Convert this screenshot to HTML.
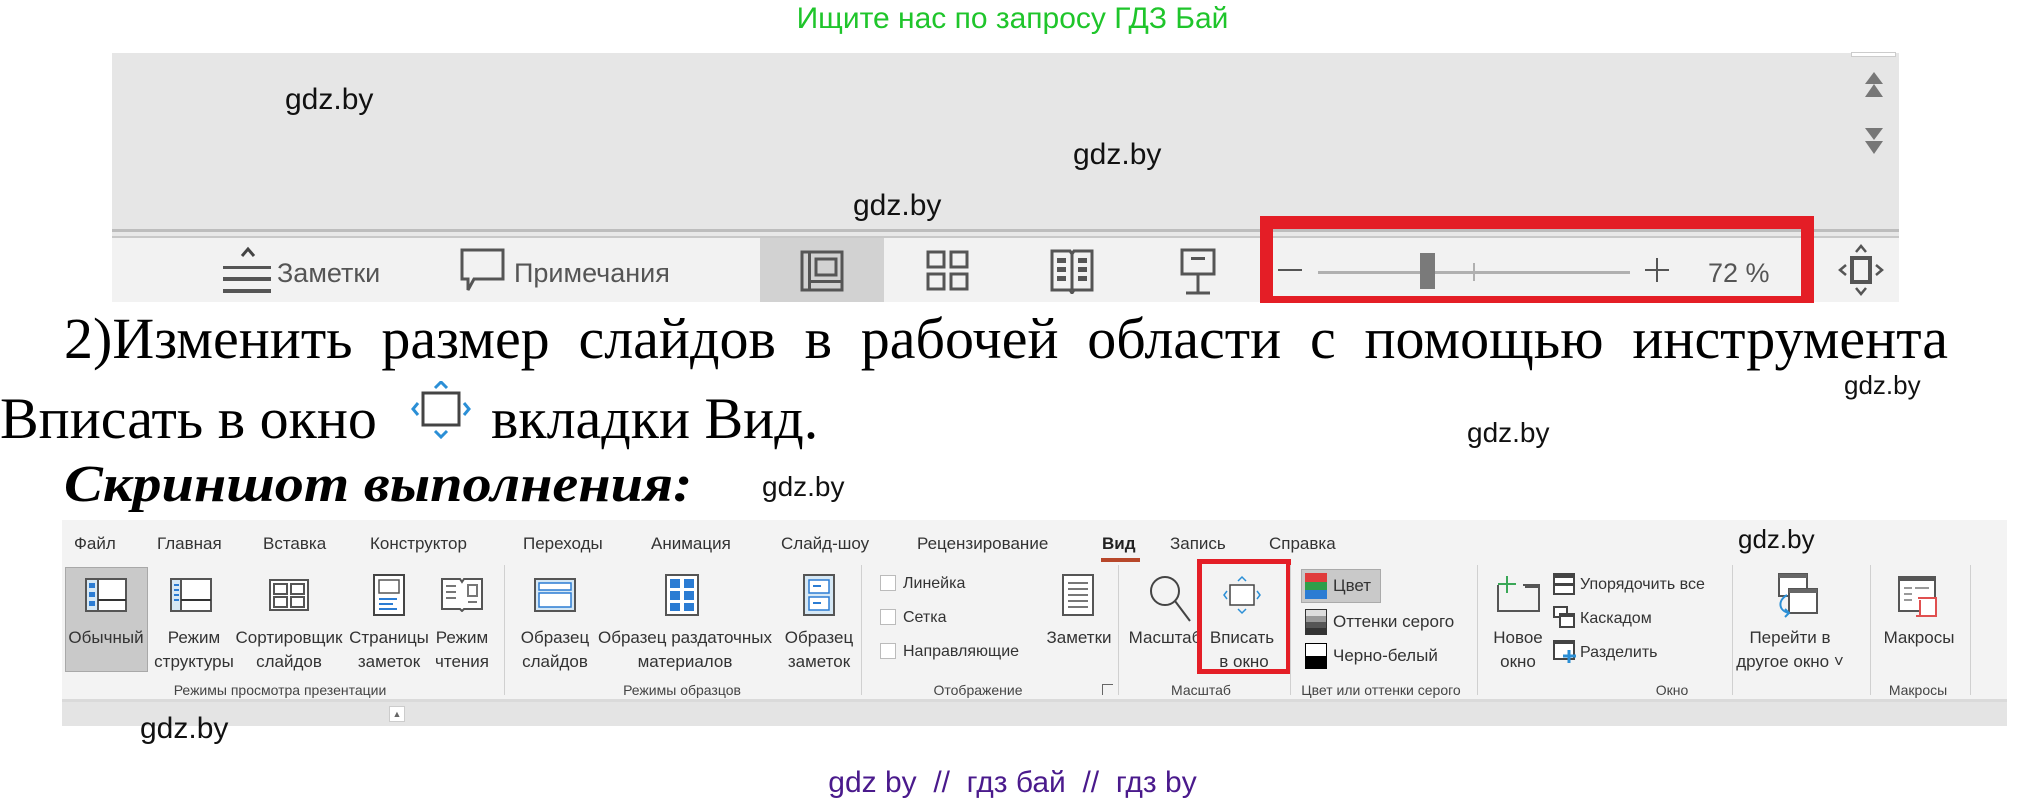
<!DOCTYPE html>
<html><head><meta charset="utf-8"><style>
*{margin:0;padding:0;box-sizing:border-box}
body{width:2025px;height:804px;background:#fff;position:relative;overflow:hidden;font-family:"Liberation Sans",sans-serif}
.a{position:absolute;white-space:nowrap}
.w{position:absolute;font-family:"Liberation Sans",sans-serif;color:#111;line-height:1;white-space:nowrap}
.s{font-family:"Liberation Serif",serif;color:#000;line-height:1;position:absolute;white-space:nowrap;transform-origin:0 0}
.r{position:absolute;font-size:17px;color:#333;line-height:1;white-space:nowrap}
.c{text-align:center;transform:translateX(-50%)}
.g{position:absolute;font-size:14px;color:#444;line-height:1;white-space:nowrap;transform:translateX(-50%)}
.sep{position:absolute;width:1px;background:#d0d0d0;top:565px;height:130px}
</style></head><body>

<div class="a" style="left:0;width:2025px;top:2px;text-align:center;font-size:30px;color:#1fc52b;line-height:34px">Ищите нас по запросу ГДЗ Бай</div>

<!-- top panel -->
<div class="a" style="left:112px;top:53px;width:1787px;height:176px;background:#e6e6e6"></div>
<div class="a" style="left:1851px;top:52px;width:45px;height:5px;background:#fff;border:1px solid #ccc"></div>
<div class="a" style="left:112px;top:229px;width:1787px;height:3px;background:#bdbdbd"></div>
<div class="a" style="left:112px;top:232px;width:1787px;height:4px;background:#e8e8e8"></div>
<div class="a" style="left:112px;top:236px;width:1787px;height:2px;background:#c8c8c8"></div>
<div class="a" style="left:112px;top:238px;width:1787px;height:64px;background:#f2f2f2"></div>
<svg class="a" style="left:1862px;top:72px" width="24" height="90" viewBox="0 0 24 90"><g fill="#777"><path d="M12 0 L21 12 H3Z M12 12 L21 25 H3Z"/><path d="M3 56 H21 L12 68Z M3 69 H21 L12 82Z"/></g></svg>

<!-- bottom bar -->
<svg class="a" style="left:222px;top:246px" width="52" height="50" viewBox="0 0 52 50"><path d="M20 10 L26 3 L32 10" stroke="#444" stroke-width="3" fill="none"/><g fill="#555"><rect x="1" y="20" width="48" height="3"/><rect x="1" y="31" width="48" height="4"/><rect x="1" y="43" width="48" height="4"/></g></svg>
<div class="a" style="left:277px;top:258px;font-size:27px;color:#555;line-height:30px">Заметки</div>
<svg class="a" style="left:460px;top:248px" width="46" height="46" viewBox="0 0 46 46"><path d="M2 2 H43 V31 H14 L8 42 L8 31 H2Z" fill="none" stroke="#555" stroke-width="3"/></svg>
<div class="a" style="left:514px;top:258px;font-size:27px;color:#555;line-height:30px">Примечания</div>
<div class="a" style="left:760px;top:238px;width:124px;height:64px;background:#d2d2d2"></div>
<svg class="a" style="left:800px;top:250px" width="44" height="42" viewBox="0 0 44 42"><rect x="2" y="2" width="40" height="38" fill="none" stroke="#555" stroke-width="3"/><rect x="8" y="2" width="3" height="38" fill="#555"/><rect x="16" y="9" width="20" height="16" fill="none" stroke="#555" stroke-width="3"/><rect x="11" y="30" width="31" height="3" fill="#555"/></svg>
<svg class="a" style="left:926px;top:250px" width="44" height="42" viewBox="0 0 44 42"><g fill="none" stroke="#555" stroke-width="3"><rect x="2" y="2" width="16" height="15"/><rect x="25" y="2" width="16" height="15"/><rect x="2" y="24" width="16" height="15"/><rect x="25" y="24" width="16" height="15"/></g></svg>
<svg class="a" style="left:1050px;top:248px" width="44" height="46" viewBox="0 0 44 46"><g fill="none" stroke="#555" stroke-width="3"><path d="M2 3 H20 L22 6 L24 3 H42 V42 H24 L22 45 L20 42 H2Z"/><path d="M22 6 V42"/></g><g fill="#555"><rect x="7" y="10" width="9" height="5"/><rect x="7" y="19" width="9" height="5"/><rect x="7" y="28" width="9" height="5"/><rect x="28" y="10" width="9" height="5"/><rect x="28" y="19" width="9" height="5"/><rect x="28" y="28" width="9" height="5"/></g></svg>
<svg class="a" style="left:1177px;top:248px" width="42" height="48" viewBox="0 0 42 48"><g fill="none" stroke="#555" stroke-width="3"><rect x="5" y="2" width="32" height="24"/><path d="M21 26 V44 M9 45 H33"/></g><rect x="14" y="9" width="14" height="3" fill="#555"/></svg>
<div class="a" style="left:1260px;top:216px;width:554px;height:87px;border:13px solid #e41e26;border-bottom-width:7px"></div>
<div class="a" style="left:1278px;top:269px;width:24px;height:2px;background:#555"></div>
<div class="a" style="left:1318px;top:271px;width:312px;height:3px;background:#b0b0b0"></div>
<div class="a" style="left:1420px;top:253px;width:15px;height:36px;background:#7a7a7a"></div>
<div class="a" style="left:1473px;top:263px;width:2px;height:18px;background:#b0b0b0"></div>
<div class="a" style="left:1645px;top:269px;width:24px;height:2px;background:#555"></div>
<div class="a" style="left:1656px;top:258px;width:2px;height:24px;background:#555"></div>
<div class="a" style="left:1708px;top:258px;font-size:27px;color:#555;line-height:30px">72 %</div>
<svg class="a" style="left:1838px;top:244px" width="46" height="52" viewBox="0 0 46 52"><rect x="14" y="14" width="18" height="24" fill="none" stroke="#555" stroke-width="4"/><g fill="none" stroke="#555" stroke-width="2.5"><path d="M18 8 L23 2 L28 8"/><path d="M18 44 L23 50 L28 44"/><path d="M8 21 L2 26 L8 31"/><path d="M38 21 L44 26 L38 31"/></g></svg>

<!-- body text -->
<div class="s" style="left:64px;top:310px;font-size:58px;width:1884px;text-align:justify;text-align-last:justify">2)Изменить размер слайдов в рабочей области с помощью инструмента</div>
<div class="s" style="left:0;top:390px;font-size:58px">Вписать в окно</div>
<svg class="a" style="left:410px;top:381px" width="64" height="58" viewBox="0 0 64 58"><rect x="13" y="12" width="36" height="32" fill="#fff" stroke="#444" stroke-width="3"/><g fill="none" stroke="#2b8fd6" stroke-width="3"><path d="M25 7 L31 1 L37 7"/><path d="M25 50 L31 56 L37 50"/><path d="M8 22 L3 28 L8 34"/><path d="M54 22 L59 28 L54 34"/></g></svg>
<div class="s" style="left:491px;top:390px;font-size:58px">вкладки Вид.</div>
<div class="s" style="left:64px;top:459px;font-size:52px;font-weight:bold;font-style:italic;transform:scaleX(1.12)">Скриншот выполнения:</div>

<!-- watermarks -->
<div class="w" style="left:285px;top:85px;font-size:30px">gdz.by</div>
<div class="w" style="left:853px;top:191px;font-size:30px">gdz.by</div>
<div class="w" style="left:1073px;top:140px;font-size:30px">gdz.by</div>
<div class="w" style="left:1844px;top:372px;font-size:26px">gdz.by</div>
<div class="w" style="left:1467px;top:419px;font-size:28px">gdz.by</div>
<div class="w" style="left:762px;top:473px;font-size:28px">gdz.by</div>

<!-- ribbon -->
<div class="a" style="left:62px;top:520px;width:1945px;height:181px;background:#f3f3f3"></div>
<div class="a" style="left:62px;top:701px;width:1945px;height:25px;background:#e4e4e4"></div>
<div class="a" style="left:62px;top:699px;width:1945px;height:3px;background:#dadada"></div>
<div class="a" style="left:389px;top:706px;width:16px;height:16px;background:#fff;border:1px solid #ccc;font-size:9px;color:#666;text-align:center;line-height:14px">▲</div>

<div class="r" style="left:74px;top:535px">Файл</div>
<div class="r" style="left:157px;top:535px">Главная</div>
<div class="r" style="left:263px;top:535px">Вставка</div>
<div class="r" style="left:370px;top:535px">Конструктор</div>
<div class="r" style="left:523px;top:535px">Переходы</div>
<div class="r" style="left:651px;top:535px">Анимация</div>
<div class="r" style="left:781px;top:535px">Слайд-шоу</div>
<div class="r" style="left:917px;top:535px">Рецензирование</div>
<div class="r" style="left:1102px;top:535px;font-weight:bold;color:#222">Вид</div>
<div class="a" style="left:1101px;top:558px;width:39px;height:4px;background:#b7472a"></div>
<div class="r" style="left:1170px;top:535px">Запись</div>
<div class="r" style="left:1269px;top:535px">Справка</div>

<div class="a" style="left:65px;top:567px;width:83px;height:105px;background:#c9c9c9;border:1px solid #a8a8a8"></div>
<svg class="a" style="left:85px;top:578px" width="42" height="34" viewBox="0 0 42 34"><rect x="1" y="1" width="40" height="32" fill="#fff" stroke="#555" stroke-width="2"/><rect x="1" y="1" width="12" height="32" fill="#d6e8f5" stroke="#555" stroke-width="2"/><g fill="#2b7cd3"><rect x="4" y="5" width="6" height="5"/><rect x="4" y="14" width="6" height="5"/><rect x="4" y="23" width="6" height="5"/></g><rect x="13" y="21" width="28" height="2" fill="#333"/></svg>
<svg class="a" style="left:170px;top:578px" width="42" height="34" viewBox="0 0 42 34"><rect x="1" y="1" width="40" height="32" fill="#fff" stroke="#555" stroke-width="2"/><rect x="1" y="1" width="10" height="32" fill="#d6e8f5" stroke="#555" stroke-width="2"/><g fill="#2b7cd3"><rect x="4" y="6" width="5" height="2"/><rect x="4" y="11" width="5" height="2"/><rect x="4" y="16" width="5" height="2"/><rect x="4" y="21" width="5" height="2"/></g><rect x="11" y="21" width="30" height="2" fill="#333"/></svg>
<svg class="a" style="left:269px;top:579px" width="40" height="32" viewBox="0 0 40 32"><g fill="#fff" stroke="#555" stroke-width="2"><rect x="1" y="1" width="38" height="30"/><rect x="5" y="5" width="13" height="10"/><rect x="22" y="5" width="13" height="10"/><rect x="5" y="18" width="13" height="10"/><rect x="22" y="18" width="13" height="10"/></g></svg>
<svg class="a" style="left:373px;top:574px" width="32" height="42" viewBox="0 0 32 42"><rect x="1" y="1" width="30" height="40" fill="#fff" stroke="#444" stroke-width="2"/><rect x="6" y="6" width="20" height="13" fill="#fff" stroke="#555" stroke-width="1.5"/><g fill="#2b7cd3"><rect x="6" y="24" width="18" height="2"/><rect x="6" y="29" width="14" height="2"/><rect x="6" y="34" width="18" height="2"/></g></svg>
<svg class="a" style="left:441px;top:578px" width="42" height="34" viewBox="0 0 42 34"><path d="M1 1 H19 L21 4 L23 1 H41 V31 H23 L21 33 L19 31 H1Z" fill="#fff" stroke="#555" stroke-width="2"/><g fill="#777"><rect x="5" y="7" width="10" height="2"/><rect x="5" y="13" width="10" height="2"/><rect x="5" y="19" width="10" height="2"/></g><rect x="27" y="7" width="9" height="11" fill="none" stroke="#777" stroke-width="2"/><rect x="27" y="23" width="9" height="2" fill="#777"/></svg>
<div class="r c" style="left:106px;top:629px">Обычный</div>
<div class="r c" style="left:194px;top:629px">Режим</div>
<div class="r c" style="left:194px;top:653px">структуры</div>
<div class="r c" style="left:289px;top:629px">Сортировщик</div>
<div class="r c" style="left:289px;top:653px">слайдов</div>
<div class="r c" style="left:389px;top:629px">Страницы</div>
<div class="r c" style="left:389px;top:653px">заметок</div>
<div class="r c" style="left:462px;top:629px">Режим</div>
<div class="r c" style="left:462px;top:653px">чтения</div>
<div class="g" style="left:280px;top:683px">Режимы просмотра презентации</div>
<div class="sep" style="left:504px"></div>

<svg class="a" style="left:534px;top:578px" width="42" height="34" viewBox="0 0 42 34"><rect x="1" y="1" width="40" height="32" fill="#d6e8f5" stroke="#555" stroke-width="2"/><rect x="5" y="5" width="32" height="7" fill="#fff" stroke="#2b7cd3" stroke-width="1.5"/><rect x="5" y="15" width="32" height="14" fill="#fff" stroke="#2b7cd3" stroke-width="1.5"/></svg>
<svg class="a" style="left:665px;top:574px" width="34" height="42" viewBox="0 0 34 42"><rect x="1" y="1" width="32" height="40" fill="#fff" stroke="#555" stroke-width="2"/><g fill="#2b7cd3"><rect x="5" y="5" width="10" height="9"/><rect x="19" y="5" width="10" height="9"/><rect x="5" y="17" width="10" height="9"/><rect x="19" y="17" width="10" height="9"/><rect x="5" y="29" width="10" height="8"/><rect x="19" y="29" width="10" height="8"/></g></svg>
<svg class="a" style="left:803px;top:574px" width="32" height="42" viewBox="0 0 32 42"><rect x="1" y="1" width="30" height="40" fill="#d6e8f5" stroke="#555" stroke-width="2"/><rect x="6" y="6" width="20" height="13" fill="#fff" stroke="#2b7cd3" stroke-width="1.5"/><rect x="6" y="23" width="20" height="13" fill="#fff" stroke="#2b7cd3" stroke-width="1.5"/><rect x="10" y="11" width="8" height="2" fill="#2b7cd3"/><rect x="10" y="28" width="8" height="2" fill="#2b7cd3"/></svg>
<div class="r c" style="left:555px;top:629px">Образец</div>
<div class="r c" style="left:555px;top:653px">слайдов</div>
<div class="r c" style="left:685px;top:629px">Образец раздаточных</div>
<div class="r c" style="left:685px;top:653px">материалов</div>
<div class="r c" style="left:819px;top:629px">Образец</div>
<div class="r c" style="left:819px;top:653px">заметок</div>
<div class="g" style="left:682px;top:683px">Режимы образцов</div>
<div class="sep" style="left:861px"></div>

<div class="a" style="left:880px;top:575px;width:16px;height:16px;border:1px solid #bbb;background:#fff"></div>
<div class="a" style="left:880px;top:609px;width:16px;height:16px;border:1px solid #bbb;background:#fff"></div>
<div class="a" style="left:880px;top:643px;width:16px;height:16px;border:1px solid #bbb;background:#fff"></div>
<div class="r" style="left:903px;top:576px;font-size:16px">Линейка</div>
<div class="r" style="left:903px;top:610px;font-size:16px">Сетка</div>
<div class="r" style="left:903px;top:644px;font-size:16px">Направляющие</div>
<svg class="a" style="left:1062px;top:574px" width="32" height="42" viewBox="0 0 32 42"><rect x="1" y="1" width="30" height="40" fill="#fff" stroke="#555" stroke-width="2"/><g fill="#777"><rect x="6" y="8" width="20" height="2"/><rect x="6" y="14" width="20" height="2"/><rect x="6" y="20" width="20" height="2"/><rect x="6" y="26" width="20" height="2"/><rect x="6" y="32" width="20" height="2"/></g></svg>
<div class="r c" style="left:1079px;top:629px">Заметки</div>
<div class="g" style="left:978px;top:683px">Отображение</div>
<div class="a" style="left:1102px;top:684px;width:11px;height:11px;border:1px solid #666;border-right:none;border-bottom:none;font-size:0"></div>
<div class="sep" style="left:1118px"></div>

<svg class="a" style="left:1148px;top:574px" width="44" height="50" viewBox="0 0 44 50"><circle cx="17" cy="17" r="14" fill="none" stroke="#444" stroke-width="2"/><path d="M27 27 L42 47" stroke="#444" stroke-width="2"/></svg>
<div class="r c" style="left:1165px;top:629px">Масштаб</div>
<svg class="a" style="left:1222px;top:575px" width="40" height="40" viewBox="0 0 40 40"><rect x="8" y="10" width="24" height="20" fill="#fff" stroke="#444" stroke-width="1.5"/><g fill="none" stroke="#2b8fd6" stroke-width="1.5"><path d="M16 6 L20 2 L24 6"/><path d="M16 34 L20 38 L24 34"/><path d="M5 16 L2 20 L5 24"/><path d="M35 16 L38 20 L35 24"/></g></svg>
<div class="r c" style="left:1242px;top:629px;background:#f3f3f3">Вписать</div>
<div class="r c" style="left:1244px;top:653px">в окно</div>
<div class="a" style="left:1197px;top:559px;width:94px;height:115px;border:5px solid #e41e26"></div>
<div class="g" style="left:1201px;top:683px">Масштаб</div>
<div class="sep" style="left:1290px"></div>

<div class="a" style="left:1301px;top:569px;width:80px;height:34px;background:#c9c9c9;border:1px solid #aaa"></div>
<svg class="a" style="left:1305px;top:573px" width="22" height="26" viewBox="0 0 22 26"><rect width="22" height="9" fill="#e03c3c"/><rect y="9" width="22" height="8" fill="#2e9e4a"/><rect y="17" width="22" height="9" fill="#2b7cd3"/></svg>
<div class="r" style="left:1333px;top:577px">Цвет</div>
<svg class="a" style="left:1305px;top:609px" width="22" height="26" viewBox="0 0 22 26"><rect width="22" height="26" fill="#333"/><rect x="1" y="1" width="20" height="6" fill="#ddd"/><rect x="1" y="7" width="20" height="6" fill="#999"/><rect x="1" y="13" width="20" height="6" fill="#555"/></svg>
<div class="r" style="left:1333px;top:613px">Оттенки серого</div>
<svg class="a" style="left:1305px;top:643px" width="22" height="26" viewBox="0 0 22 26"><rect width="22" height="26" fill="#000"/><rect x="1" y="1" width="20" height="12" fill="#fff"/></svg>
<div class="r" style="left:1333px;top:647px">Черно-белый</div>
<div class="g" style="left:1381px;top:683px">Цвет или оттенки серого</div>
<div class="sep" style="left:1477px"></div>

<svg class="a" style="left:1495px;top:575px" width="46" height="38" viewBox="0 0 46 38"><path d="M3 10 V36 H44 V10 H28" fill="none" stroke="#555" stroke-width="2"/><rect x="30" y="9" width="14" height="4" fill="#555"/><path d="M12 1 V18 M3 9 H21" stroke="#3aa757" stroke-width="2"/></svg>
<div class="r c" style="left:1518px;top:629px">Новое</div>
<div class="r c" style="left:1518px;top:653px">окно</div>
<svg class="a" style="left:1553px;top:573px" width="22" height="22" viewBox="0 0 22 22"><rect x="1" y="1" width="20" height="20" fill="#fff" stroke="#444" stroke-width="2"/><rect x="1" y="1" width="20" height="4" fill="#444"/><rect x="1" y="10" width="20" height="3" fill="#444"/></svg>
<div class="r" style="left:1580px;top:577px;font-size:16px">Упорядочить все</div>
<svg class="a" style="left:1553px;top:606px" width="22" height="22" viewBox="0 0 22 22"><rect x="1" y="1" width="13" height="10" fill="#fff" stroke="#444" stroke-width="2"/><rect x="7" y="8" width="14" height="13" fill="#fff" stroke="#444" stroke-width="2"/><rect x="7" y="8" width="14" height="3" fill="#444"/></svg>
<div class="r" style="left:1580px;top:611px;font-size:16px">Каскадом</div>
<svg class="a" style="left:1553px;top:640px" width="24" height="24" viewBox="0 0 24 24"><rect x="1" y="1" width="20" height="18" fill="#fff" stroke="#444" stroke-width="2"/><rect x="1" y="1" width="20" height="3" fill="#444"/><path d="M16 10 V23 M10 16 H23" stroke="#2b8fd6" stroke-width="3"/></svg>
<div class="r" style="left:1580px;top:645px;font-size:16px">Разделить</div>
<div class="g" style="left:1672px;top:683px">Окно</div>
<div class="sep" style="left:1732px"></div>

<svg class="a" style="left:1775px;top:573px" width="44" height="46" viewBox="0 0 44 46"><rect x="4" y="1" width="28" height="22" fill="#fff" stroke="#555" stroke-width="2"/><rect x="4" y="1" width="28" height="4" fill="#666"/><rect x="14" y="16" width="28" height="24" fill="#fff" stroke="#555" stroke-width="2"/><rect x="14" y="16" width="28" height="4" fill="#666"/><path d="M12 22 C2 28 4 38 14 40 M10 36 L14 40 L10 44" fill="none" stroke="#2b8fd6" stroke-width="2"/></svg>
<div class="r c" style="left:1790px;top:629px">Перейти в</div>
<div class="r c" style="left:1790px;top:653px">другое окно ˅</div>
<div class="sep" style="left:1870px"></div>

<svg class="a" style="left:1898px;top:576px" width="42" height="44" viewBox="0 0 42 44"><rect x="1" y="1" width="36" height="34" fill="#fff" stroke="#555" stroke-width="2"/><rect x="1" y="1" width="36" height="4" fill="#555"/><g fill="#999"><rect x="6" y="11" width="8" height="2"/><rect x="17" y="11" width="14" height="2"/><rect x="6" y="17" width="8" height="2"/><rect x="6" y="23" width="8" height="2"/></g><path d="M20 22 H38 V40 H22 V24" fill="#fff" stroke="#e05050" stroke-width="2"/><path d="M18 40 H30" stroke="#e05050" stroke-width="2"/></svg>
<div class="r c" style="left:1919px;top:629px">Макросы</div>
<div class="g" style="left:1918px;top:683px">Макросы</div>
<div class="sep" style="left:1970px"></div>

<div class="w" style="left:140px;top:714px;font-size:30px">gdz.by</div>
<div class="w" style="left:1738px;top:526px;font-size:26px">gdz.by</div>

<div class="a" style="left:0;width:2025px;top:766px;text-align:center;font-size:30px;color:#4a1a8c;line-height:34px">gdz by&nbsp; //&nbsp; гдз бай&nbsp; //&nbsp; гдз by</div>
</body></html>
